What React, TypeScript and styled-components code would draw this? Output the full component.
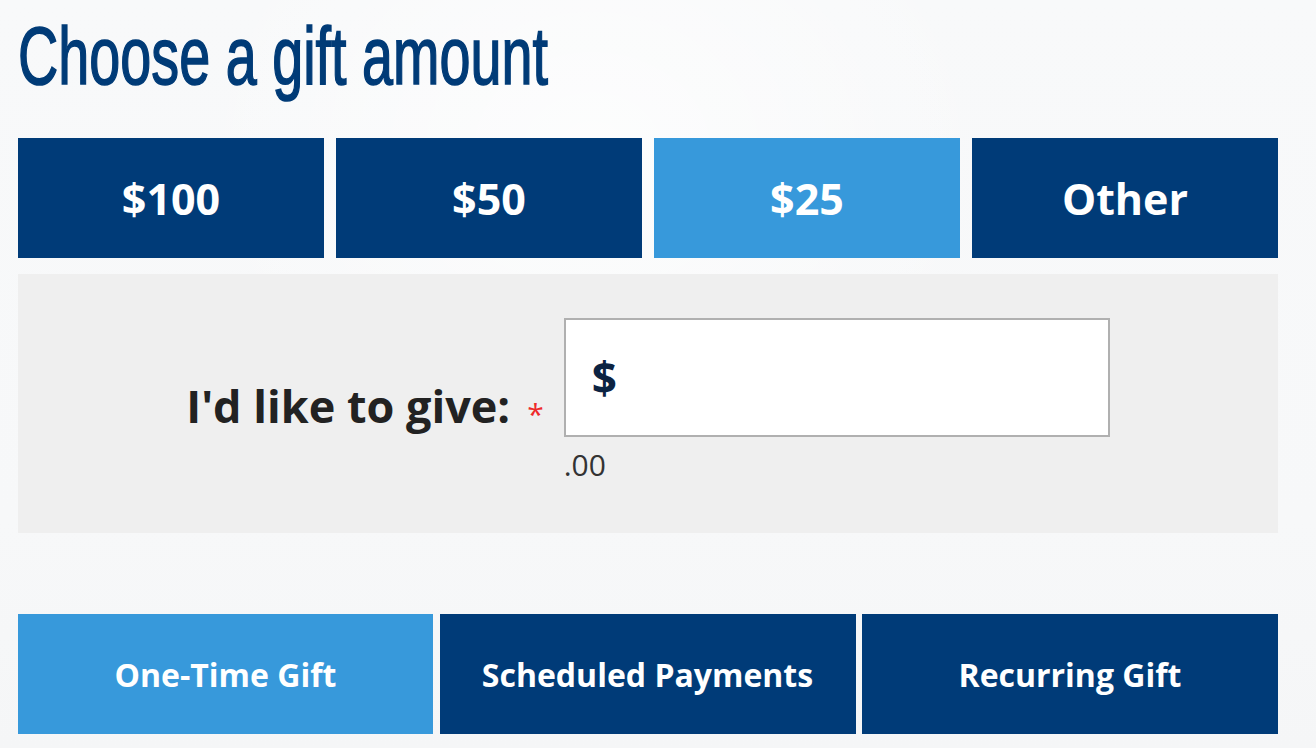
import React from "react";
import styled, { createGlobalStyle } from "styled-components";

const Global = createGlobalStyle`
  html, body {
    margin: 0;
    padding: 0;
    background: #f7f9fa;
  }
  body {
    font-family: "Open Sans", "Liberation Sans", sans-serif;
  }
`;

const Page = styled.div`
  width: 1316px;
  height: 748px;
  overflow: hidden;
  box-sizing: border-box;
  padding: 0 38px 0 18px;
  background:
    radial-gradient(ellipse at 45% 20%, rgba(255,255,255,0.7) 0%, rgba(255,255,255,0) 40%),
    linear-gradient(180deg, #f8f9fa 0%, #f7f8f9 70%, #f5f6f7 100%);
  display: flex;
  flex-direction: column;
`;

const Heading = styled.h1`
  margin: 0;
  height: 138px;
  font-family: "Liberation Sans", Arial, sans-serif;
  font-weight: 400;
  font-size: 82px;
  line-height: 1;
  color: #003b77;
  white-space: nowrap;
  transform: scaleX(0.68);
  transform-origin: left top;
  padding-top: 15px;
  box-sizing: border-box;
  -webkit-text-stroke: 1.6px #003b77;
`;

const AmountRow = styled.div`
  display: grid;
  grid-template-columns: repeat(4, 306px);
  column-gap: 12px;
`;

const Tile = styled.button<{ $active?: boolean; $size: number }>`
  border: none;
  margin: 0;
  padding: 0;
  height: 120px;
  background: ${(p) => (p.$active ? "#3799db" : "#003b78")};
  color: #ffffff;
  font-family: "Open Sans", sans-serif;
  font-weight: 700;
  font-size: ${(p) => p.$size}px;
  display: flex;
  align-items: center;
  justify-content: center;
  cursor: pointer;
`;

const Panel = styled.div`
  margin-top: 16px;
  height: 259px;
  background: #efefef;
  display: flex;
  justify-content: center;
  align-items: center;
  gap: 20px;
  padding-bottom: 6px;
  box-sizing: border-box;
`;

const Label = styled.label`
  display: flex;
  align-items: flex-start;
  gap: 17px;
  font-family: "Open Sans", sans-serif;
  font-weight: 700;
  font-size: 45px;
  color: #222222;
  padding-top: 10px;
`;

const Req = styled.span`
  color: #ee2a2a;
  font-size: 30px;
  font-weight: 400;
  line-height: 1;
  margin-top: 24px;
`;

const Field = styled.div`
  display: flex;
  flex-direction: column;
`;

const InputBox = styled.div`
  width: 546px;
  height: 119px;
  box-sizing: border-box;
  border: 2px solid #b0b0b0;
  background: #ffffff;
  display: flex;
  align-items: center;
  padding: 0 0 0 26px;
`;

const Currency = styled.span`
  font-family: "Open Sans", sans-serif;
  font-weight: 700;
  font-size: 44px;
  color: #0c2342;
`;

const Cents = styled.span`
  font-family: "Open Sans", sans-serif;
  font-size: 30px;
  color: #333333;
  margin-top: 8px;
  line-height: 1.3;
`;

const TypeRow = styled.div`
  margin-top: 81px;
  display: grid;
  grid-template-columns: 415px 416px 416px;
  column-gap: 6.5px;
`;

export default function App() {
  return (
    <>
      <Global />
      <Page>
        <Heading>Choose a gift amount</Heading>
        <AmountRow>
          <Tile $size={43}>$100</Tile>
          <Tile $size={43}>$50</Tile>
          <Tile $size={43} $active>$25</Tile>
          <Tile $size={43}>Other</Tile>
        </AmountRow>
        <Panel>
          <Label>
            I'd like to give:
            <Req>*</Req>
          </Label>
          <Field>
            <InputBox>
              <Currency>$</Currency>
            </InputBox>
            <Cents>.00</Cents>
          </Field>
        </Panel>
        <TypeRow>
          <Tile $size={32} $active>One-Time Gift</Tile>
          <Tile $size={32}>Scheduled Payments</Tile>
          <Tile $size={32}>Recurring Gift</Tile>
        </TypeRow>
      </Page>
    </>
  );
}
